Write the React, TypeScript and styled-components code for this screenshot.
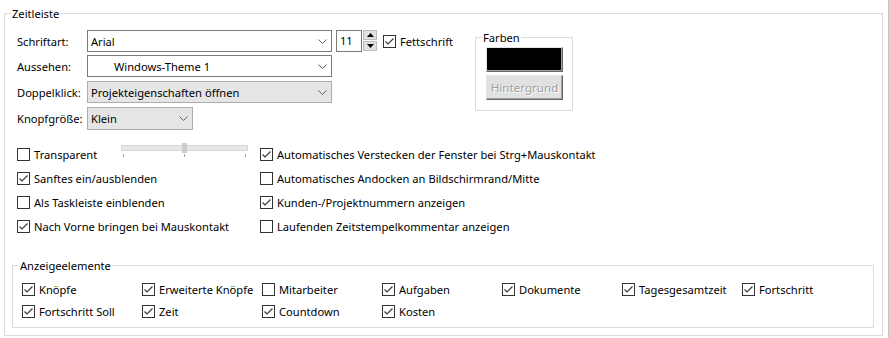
import React from "react";
import styled, { createGlobalStyle } from "styled-components";

const GlobalStyle = createGlobalStyle`
  body {
    margin: 0;
    background: #fff;
    color: #000;
    font-family: "Noto Sans", "Open Sans", sans-serif;
    font-size: 11.15px;
  }
`;

const Page = styled.div`
  width: 889px;
  height: 338px;
  box-sizing: border-box;
  padding: 13px 0 0 4px;
  border-right: 1px solid #c4c4c4;
  overflow: hidden;
`;

const GroupBox = styled.div<{ $width: number; $height: number }>`
  position: relative;
  box-sizing: border-box;
  width: ${(p) => p.$width}px;
  height: ${(p) => p.$height}px;
  border: 1px solid #dcdcdc;
`;

const Legend = styled.span`
  position: absolute;
  top: -8px;
  left: 6px;
  padding: 0 1px;
  line-height: 15px;
  background: #fff;
  white-space: nowrap;
`;

const TopArea = styled.div`
  display: flex;
  align-items: flex-start;
  padding: 16px 0 0 12px;
`;

const FormBlock = styled.div`
  width: 458px;
  display: flex;
  flex-direction: column;
`;

const FieldRow = styled.div<{ $top: number; $height?: number }>`
  display: flex;
  align-items: center;
  height: ${(p) => p.$height ?? 22}px;
  margin-top: ${(p) => p.$top}px;
`;

const FieldLabel = styled.div`
  width: 70px;
  white-space: nowrap;
`;

const Combo = styled.div<{ $width: number; $disabled?: boolean }>`
  box-sizing: border-box;
  width: ${(p) => p.$width}px;
  height: 100%;
  display: flex;
  align-items: center;
  padding: 0 4px 0 3px;
  border: 1px solid ${(p) => (p.$disabled ? "#adadad" : "#7a7a7a")};
  background: ${(p) => (p.$disabled ? "#e5e5e5" : "#fff")};
`;

const ComboValue = styled.div<{ $indent?: number }>`
  flex: 1;
  padding-left: ${(p) => p.$indent ?? 0}px;
  white-space: nowrap;
`;

const SpinBox = styled.div`
  display: flex;
  margin-left: 4px;
`;

const SpinText = styled.div`
  box-sizing: border-box;
  width: 26px;
  height: 22px;
  padding-left: 3px;
  line-height: 20px;
  border: 1px solid #7a7a7a;
`;

const SpinButtons = styled.div`
  display: flex;
  flex-direction: column;
  gap: 1px;
  margin-left: 1px;
`;

const SpinButton = styled.div`
  box-sizing: border-box;
  width: 14px;
  height: 10px;
  display: flex;
  align-items: center;
  justify-content: center;
  background: #e1e1e1;
  border: 1px solid #bdbdbd;
`;

const CheckItem = styled.label<{ $ml?: number }>`
  display: flex;
  align-items: center;
  gap: 4px;
  height: 23px;
  margin-left: ${(p) => p.$ml ?? 0}px;
  white-space: nowrap;
`;

const Box = styled.span`
  box-sizing: border-box;
  flex: none;
  width: 13px;
  height: 13px;
  border: 1px solid #333;
  background: #fff;
  display: flex;
`;

const ColorGroup = styled(GroupBox)`
  margin-top: 7px;
  padding: 9px 0 0 10px;
`;

const ColorButton = styled.div<{ $face: string; $disabled?: boolean }>`
  box-sizing: border-box;
  width: 77px;
  height: 25px;
  display: flex;
  align-items: center;
  justify-content: center;
  background: ${(p) => p.$face};
  color: ${(p) => (p.$disabled ? "#a0a0a0" : "#000")};
  text-shadow: ${(p) => (p.$disabled ? "1px 1px 0 #fff" : "none")};
  font-size: 11.6px;
  border-top: 1px solid #e3e3e3;
  border-left: 1px solid #e3e3e3;
  border-right: 1px solid #696969;
  border-bottom: 1px solid #696969;
  box-shadow: inset -1px -1px 0 #a0a0a0;
  & + & {
    margin-top: 3px;
  }
`;

const OptionGrid = styled.div`
  display: grid;
  grid-template-columns: 243px auto;
  grid-auto-rows: 24px;
  margin-top: 13px;
  padding-left: 12px;
`;

const SliderBox = styled.div`
  position: relative;
  width: 127px;
  height: 15px;
  margin: 0 12px 0 auto;
`;

const SliderTrack = styled.div`
  box-sizing: border-box;
  height: 6px;
  margin-top: 2px;
  background: #e7e7e7;
  border: 1px solid #d6d6d6;
`;

const SliderThumb = styled.div`
  position: absolute;
  top: 0;
  left: 61px;
  width: 5px;
  height: 10px;
  background: #cdcdcd;
`;

const SliderTicks = styled.div`
  display: flex;
  justify-content: space-between;
  padding: 0 2px;
  margin-top: 3px;
`;

const Tick = styled.span`
  width: 1px;
  height: 3px;
  background: #a8a8a8;
`;

const LeftCell = styled.div`
  display: flex;
  align-items: flex-start;
`;

const DisplayGroup = styled(GroupBox)`
  margin: 26px 0 0 7px;
  padding: 12px 0 0 9px;
`;

const DisplayGrid = styled.div`
  display: grid;
  grid-template-columns: repeat(7, 120px);
  grid-auto-rows: 22px;
`;

const Chevron = () => (
  <svg width="9" height="5" viewBox="0 0 9 5">
    <polyline points="0.5,0.5 4.5,4.5 8.5,0.5" fill="none" stroke="#606060" strokeWidth="1" />
  </svg>
);

const Arrow = ({ up }: { up?: boolean }) => (
  <svg width="7" height="4" viewBox="0 0 7 4">
    <polygon points={up ? "0,4 3.5,0 7,4" : "0,0 3.5,4 7,0"} fill="#000" />
  </svg>
);

const Check = ({ label, checked, ml }: { label: string; checked?: boolean; ml?: number }) => (
  <CheckItem $ml={ml}>
    <Box>
      {checked && (
        <svg width="11" height="11" viewBox="0 0 11 11">
          <polyline points="1.5,5.5 4,8 9.5,2.5" fill="none" stroke="#333" strokeWidth="1.1" />
        </svg>
      )}
    </Box>
    <span>{label}</span>
  </CheckItem>
);

const displayItems: Array<[string, boolean]> = [
  ["Knöpfe", true],
  ["Erweiterte Knöpfe", true],
  ["Mitarbeiter", false],
  ["Aufgaben", true],
  ["Dokumente", true],
  ["Tagesgesamtzeit", true],
  ["Fortschritt", true],
  ["Fortschritt Soll", true],
  ["Zeit", true],
  ["Countdown", true],
  ["Kosten", true],
];

export default function App() {
  return (
    <Page>
      <GlobalStyle />
      <GroupBox $width={879} $height={323}>
        <Legend>Zeitleiste</Legend>
        <TopArea>
          <FormBlock>
            <FieldRow $top={0}>
              <FieldLabel>Schriftart:</FieldLabel>
              <Combo $width={245}>
                <ComboValue>Arial</ComboValue>
                <Chevron />
              </Combo>
              <SpinBox>
                <SpinText>11</SpinText>
                <SpinButtons>
                  <SpinButton><Arrow up /></SpinButton>
                  <SpinButton><Arrow /></SpinButton>
                </SpinButtons>
              </SpinBox>
              <Check label="Fettschrift" checked ml={6} />
            </FieldRow>
            <FieldRow $top={3}>
              <FieldLabel>Aussehen:</FieldLabel>
              <Combo $width={245}>
                <ComboValue $indent={23}>Windows-Theme 1</ComboValue>
                <Chevron />
              </Combo>
            </FieldRow>
            <FieldRow $top={4}>
              <FieldLabel>Doppelklick:</FieldLabel>
              <Combo $width={245} $disabled>
                <ComboValue>Projekteigenschaften öffnen</ComboValue>
                <Chevron />
              </Combo>
            </FieldRow>
            <FieldRow $top={4} $height={23}>
              <FieldLabel>Knopfgröße:</FieldLabel>
              <Combo $width={106} $disabled>
                <ComboValue>Klein</ComboValue>
                <Chevron />
              </Combo>
            </FieldRow>
          </FormBlock>
          <ColorGroup $width={98} $height={74}>
            <Legend>Farben</Legend>
            <ColorButton $face="#000" />
            <ColorButton $face="#e1e1e1" $disabled>Hintergrund</ColorButton>
          </ColorGroup>
        </TopArea>

        <OptionGrid>
          <LeftCell>
            <Check label="Transparent" />
            <SliderBox>
              <SliderTrack />
              <SliderThumb />
              <SliderTicks>
                <Tick />
                <Tick />
                <Tick />
              </SliderTicks>
            </SliderBox>
          </LeftCell>
          <Check label="Automatisches Verstecken der Fenster bei Strg+Mauskontakt" checked />
          <Check label="Sanftes ein/ausblenden" checked />
          <Check label="Automatisches Andocken an Bildschirmrand/Mitte" />
          <Check label="Als Taskleiste einblenden" />
          <Check label="Kunden-/Projektnummern anzeigen" checked />
          <Check label="Nach Vorne bringen bei Mauskontakt" checked />
          <Check label="Laufenden Zeitstempelkommentar anzeigen" />
        </OptionGrid>

        <DisplayGroup $width={862} $height={63}>
          <Legend>Anzeigeelemente</Legend>
          <DisplayGrid>
            {displayItems.map(([label, checked]) => (
              <Check key={label} label={label} checked={checked} />
            ))}
          </DisplayGrid>
        </DisplayGroup>
      </GroupBox>
    </Page>
  );
}
